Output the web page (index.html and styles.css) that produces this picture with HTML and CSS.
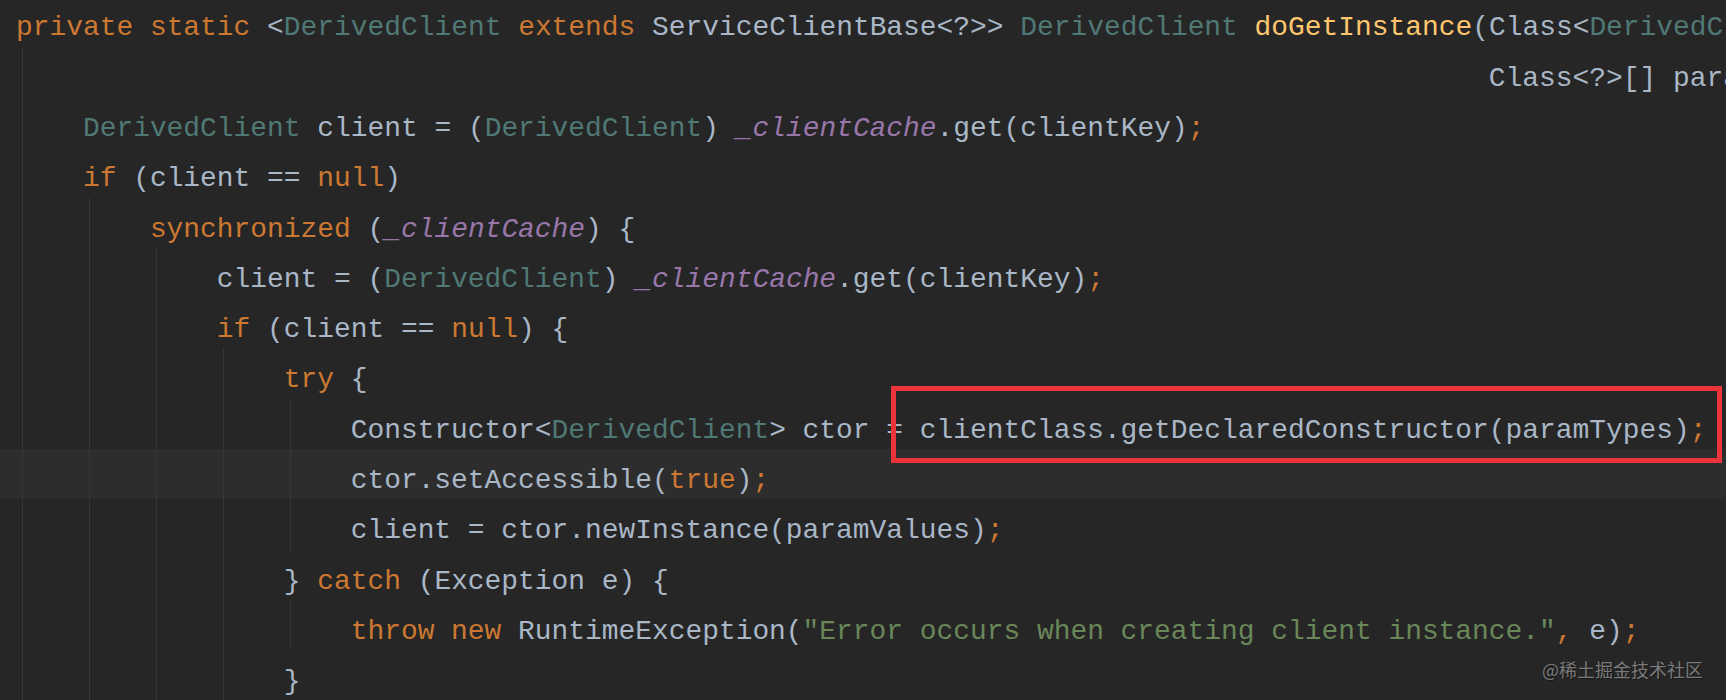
FILE: index.html
```html
<!DOCTYPE html>
<html lang="en">
<head>
    <meta charset="UTF-8">
    <title>doGetInstance</title>
    <link rel="stylesheet" href="styles.css">
</head>
<body>
    <div class="page">
        <div class="editor">
            <div class="line"><span class="code"><span class="kw">private static </span>&lt;<span class="tp">DerivedClient</span><span class="kw"> extends </span>ServiceClientBase&lt;?&gt;&gt; <span class="tp">DerivedClient</span> <span class="fn">doGetInstance</span>(Class&lt;<span class="tp">DerivedClient</span>&gt; clientClass<span class="kw">,</span> Object clientKey<span class="kw">,</span></span></div>
            <div class="line"><span class="ind"></span><span class="code cont">Class&lt;?&gt;[] paramTypes<span class="kw">,</span> Object[] paramValues) {</span></div>
            <div class="line"><span class="ind"></span><span class="code"><span class="tp">DerivedClient</span> client = (<span class="tp">DerivedClient</span>) <span class="field">_clientCache</span>.get(clientKey)<span class="kw">;</span></span></div>
            <div class="line"><span class="ind"></span><span class="code"><span class="kw">if</span> (client == <span class="kw">null</span>)</span></div>
            <div class="line"><span class="ind"></span><span class="ind"></span><span class="code"><span class="kw">synchronized</span> (<span class="field">_clientCache</span>) {</span></div>
            <div class="line"><span class="ind"></span><span class="ind"></span><span class="ind"></span><span class="code">client = (<span class="tp">DerivedClient</span>) <span class="field">_clientCache</span>.get(clientKey)<span class="kw">;</span></span></div>
            <div class="line"><span class="ind"></span><span class="ind"></span><span class="ind"></span><span class="code"><span class="kw">if</span> (client == <span class="kw">null</span>) {</span></div>
            <div class="line"><span class="ind"></span><span class="ind"></span><span class="ind"></span><span class="ind"></span><span class="code"><span class="kw">try</span> {</span></div>
            <div class="line"><span class="ind"></span><span class="ind"></span><span class="ind"></span><span class="ind"></span><span class="ind"></span><span class="code">Constructor&lt;<span class="tp">DerivedClient</span>&gt; ctor = clientClass.getDeclaredConstructor(paramTypes)<span class="kw">;</span></span></div>
            <div class="line current"><span class="ind"></span><span class="ind"></span><span class="ind"></span><span class="ind"></span><span class="ind"></span><span class="code">ctor.setAccessible(<span class="kw">true</span>)<span class="kw">;</span></span></div>
            <div class="line"><span class="ind"></span><span class="ind"></span><span class="ind"></span><span class="ind"></span><span class="ind"></span><span class="code">client = ctor.newInstance(paramValues)<span class="kw">;</span></span></div>
            <div class="line"><span class="ind"></span><span class="ind"></span><span class="ind"></span><span class="ind"></span><span class="code">} <span class="kw">catch</span> (Exception e) {</span></div>
            <div class="line"><span class="ind"></span><span class="ind"></span><span class="ind"></span><span class="ind"></span><span class="ind"></span><span class="code"><span class="kw">throw new</span> RuntimeException(<span class="str">"Error occurs when creating client instance."</span><span class="kw">,</span> e)<span class="kw">;</span></span></div>
            <div class="line"><span class="ind"></span><span class="ind"></span><span class="ind"></span><span class="ind"></span><span class="code">}</span></div>
        </div>
        <div class="mark"></div>
        <div class="watermark">@稀土掘金技术社区</div>
    </div>
</body>
</html>
```

FILE: styles.css
```css
body {
    margin: 0;
    background: #262626;
    overflow: hidden;
}
.page {
    position: relative;
    width: 1726px; height: 700px;
    overflow: hidden;
}
.editor {
    margin-top: -3.7px;
    font-family: 'Liberation Mono', 'DejaVu Sans Mono', monospace;
    font-size: 27.9px;
    color: #a9b7c6;
}
.line {
    display: flex;
    height: 50.3px;
    padding-left: 16px;
    white-space: pre;
}
.line.current { background: #2d2d2d; }
.ind {
    flex: none; width: 4ch;
    background: linear-gradient(to right, transparent 6px, #363636 6px, #363636 7px, transparent 7px);
}
.code { padding-top: 14px; line-height: 36px; }
.cont { padding-left: 84ch; }
.kw { color: #cc7832; }
.tp { color: #507874; }
.fn { color: #ffc66d; }
.field { color: #9876aa; font-style: italic; }
.str { color: #6a8759; }
.mark {
    position: absolute;
    left: 891px; top: 386px;
    width: 831px; height: 77px;
    box-sizing: border-box;
    border: 5px solid #eb333a;
}
.watermark {
    position: absolute;
    right: 23px; bottom: 22px;
    font-family: 'Noto Sans CJK SC', sans-serif;
    font-size: 18px; line-height: 18px;
    color: #7a7a7a;
    text-shadow: 1px 1px 1px rgba(0, 0, 0, 0.4);
}
```
